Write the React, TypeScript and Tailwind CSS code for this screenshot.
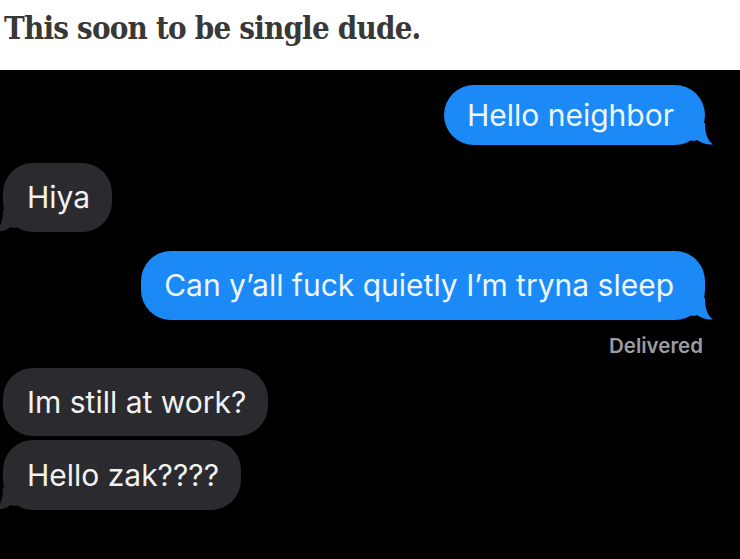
import React from "react";

function Tail({ color, side }: { color: string; side: "left" | "right" }) {
  return (
    <svg
      width="22"
      height="22"
      viewBox="0 0 22 22"
      className={
        side === "right"
          ? "absolute bottom-0 right-[-8px]"
          : "absolute bottom-0 left-[-8px] -scale-x-100"
      }
    >
      <path
        d="M0 0 H14 C14 10 16 17 22 21.5 C16 22 10 20 6 17 C4 18 2 18 0 17.5 Z"
        fill={color}
      />
    </svg>
  );
}

function Sent({ text, tail, className }: { text: string; tail?: boolean; className?: string }) {
  return (
    <div className={`flex justify-end pr-[35px] ${className ?? ""}`}>
      <div className="relative flex items-center rounded-[30px] bg-[#1c8af6] pl-[23px] pr-[31px] text-[30px] text-[#eef6ff]">
        <span className="relative z-10">{text}</span>
        {tail && <Tail color="#1c8af6" side="right" />}
      </div>
    </div>
  );
}

function Received({ text, tail, className }: { text: string; tail?: boolean; className?: string }) {
  return (
    <div className={`flex justify-start pl-[3px] ${className ?? ""}`}>
      <div className="relative flex items-center rounded-[30px] bg-[#2b2a2f] pl-[24px] pr-[22px] text-[30px] text-[#f2f2f2]">
        <span className="relative z-10">{text}</span>
        {tail && <Tail color="#2b2a2f" side="left" />}
      </div>
    </div>
  );
}

export default function App() {
  return (
    <div className="h-[559px] w-[740px] overflow-hidden bg-white">
      {/* Post title */}
      <div className="h-[70px] pl-[4px] pt-[8px]">
        <h1 className="font-['DejaVu_Serif_Condensed','DejaVu_Serif',serif] text-[31px] leading-[40px] font-bold tracking-[-0.8px] text-[#383838]">
          This soon to be single dude.
        </h1>
      </div>

      {/* Screenshot of the chat */}
      <div className="flex h-[489px] flex-col bg-black pt-[15px] font-['Inter',sans-serif]">
        <Sent text="Hello neighbor" tail className="[&>div]:h-[60px]" />
        <Received text="Hiya" tail className="mt-[18px] [&>div]:h-[69px]" />
        <Sent text="Can y’all fuck quietly I’m tryna sleep" tail className="mt-[19px] [&>div]:h-[69px]" />
        <div className="mt-[12px] pr-[37px] text-right text-[20.5px] leading-[28px] font-semibold text-[#9c9ca1]">
          Delivered
        </div>
        <Received text="Im still at work?" className="mt-[8px] [&>div]:h-[68px]" />
        <Received text="Hello zak????" tail className="mt-[4px] [&>div]:h-[70px]" />
      </div>
    </div>
  );
}
